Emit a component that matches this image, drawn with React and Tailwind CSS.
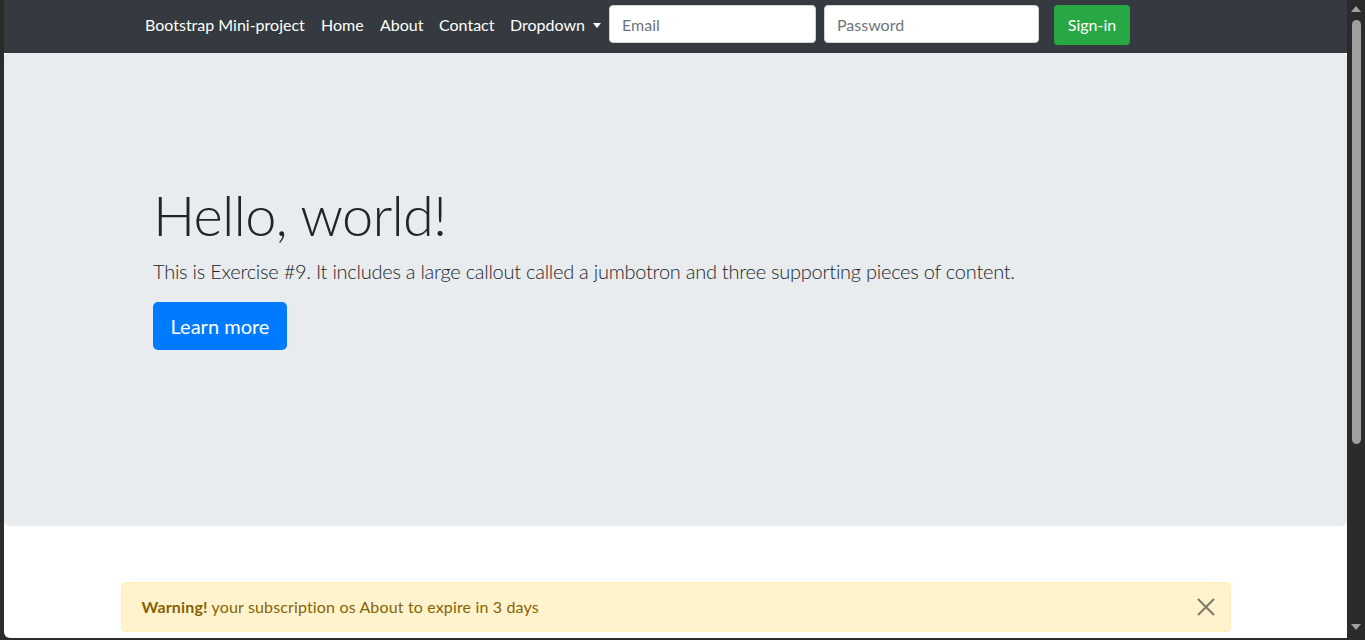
import React from "react";

const font = { fontFamily: "Lato, 'Noto Sans', sans-serif" };

export default function App() {
  return (
    <div className="w-[1365px] h-[640px] bg-[#2b2b2b] flex flex-col overflow-hidden" style={font}>
      <div className="flex flex-1 min-h-0">
        <div className="w-[4px] shrink-0" />
        <div className="flex-1 flex flex-col bg-white rounded-bl-[6px] overflow-hidden">
          {/* Navbar */}
          <nav className="h-[53px] shrink-0 bg-[#343a40] flex items-start pt-[5px] pl-[141px] text-white text-[16px]">
            <div className="flex items-center h-[40px]">
              <a className="w-[176px] whitespace-nowrap">Bootstrap Mini-project</a>
              <a className="w-[59px]">Home</a>
              <a className="w-[59px]">About</a>
              <a className="w-[71px]">Contact</a>
              <a className="w-[99px] flex items-center">
                Dropdown
                <span className="ml-[8px] w-0 h-0 border-l-[4px] border-r-[4px] border-t-[5px] border-l-transparent border-r-transparent border-t-white" />
              </a>
            </div>
            <input
              className="w-[207px] h-[38px] bg-white border border-[#ced4da] rounded-[4px] px-[12px] text-[16px] text-[#495057] placeholder:text-[#6c757d] outline-none"
              placeholder="Email"
              style={font}
            />
            <input
              className="ml-[8px] w-[215px] h-[38px] bg-white border border-[#ced4da] rounded-[4px] px-[12px] text-[16px] text-[#495057] placeholder:text-[#6c757d] outline-none"
              placeholder="Password"
              style={font}
            />
            <button className="ml-[15px] w-[76px] h-[40px] bg-[#28a745] rounded-[4px] text-white text-[16px]" style={font}>
              Sign-in
            </button>
          </nav>

          {/* Jumbotron */}
          <section className="h-[473px] shrink-0 bg-[#e9ecef] rounded-[5px] pl-[149px] pt-[128px] text-[#212529]">
            <h1 className="text-[56px] font-light leading-[1.2] mb-[8px] tracking-[-0.8px]">Hello, world!</h1>
            <p className="text-[20px] font-light leading-[1.5] mb-[16px] tracking-[-0.25px]">
              This is Exercise #9. It includes a large callout called a jumbotron and three supporting pieces of content.
            </p>
            <button className="w-[134px] h-[48px] bg-[#007bff] rounded-[5px] text-white text-[20px]" style={font}>
              Learn more
            </button>
          </section>

          {/* Alert */}
          <div className="pt-[56px] flex justify-center">
            <div className="w-[1110px] h-[50px] bg-[#fff3cd] border border-[#ffeeba] rounded-[4px] text-[#856404] text-[16px] flex items-center pl-[20px] pr-[13px]">
              <span className="flex-1 tracking-[0.15px]">
                <strong className="font-bold">Warning!</strong> your subscription os About to expire in 3 days
              </span>
              <svg width="20" height="20" viewBox="0 0 20 20" className="mr-[1px]">
                <path d="M2 2 L18 18 M18 2 L2 18" stroke="#000" strokeOpacity="0.5" strokeWidth="2" fill="none" />
              </svg>
            </div>
          </div>
        </div>

        {/* Scrollbar */}
        <div className="w-[18px] shrink-0 bg-[#2b2b2b] flex flex-col items-center relative">
          <div className="mt-[6px] w-0 h-0 border-l-[5px] border-r-[5px] border-b-[6px] border-l-transparent border-r-transparent border-b-[#a3a3a3]" />
          <div className="mt-[8px] w-[9px] h-[424px] bg-[#9f9f9f] rounded-full" />
          <div className="flex-1" />
          <div className="mb-[8px] w-0 h-0 border-l-[5px] border-r-[5px] border-t-[6px] border-l-transparent border-r-transparent border-t-[#a3a3a3]" />
        </div>
      </div>
      <div className="h-[2px] shrink-0" />
    </div>
  );
}
